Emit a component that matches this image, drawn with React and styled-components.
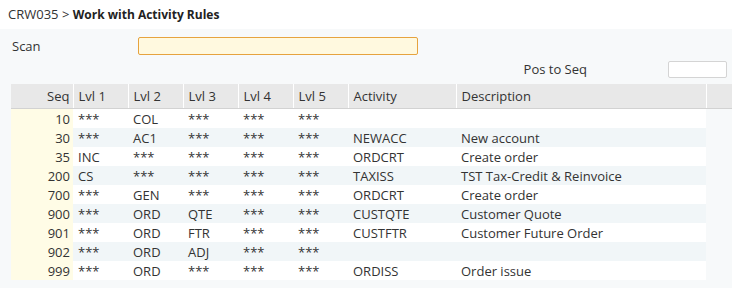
import styled, { createGlobalStyle } from "styled-components";

const GlobalStyle = createGlobalStyle`
  body {
    margin: 0;
    background: #ffffff;
    font-family: "Open Sans", "Liberation Sans", sans-serif;
    color: #333333;
  }
`;

const columns = [
  { key: "seq", label: "Seq", width: 62, align: "right" },
  { key: "l1", label: "Lvl 1", width: 55 },
  { key: "l2", label: "Lvl 2", width: 55 },
  { key: "l3", label: "Lvl 3", width: 55 },
  { key: "l4", label: "Lvl 4", width: 55 },
  { key: "l5", label: "Lvl 5", width: 55 },
  { key: "act", label: "Activity", width: 108 },
  { key: "desc", label: "Description", width: 250 },
];

const rows = [
  ["10", "***", "COL", "***", "***", "***", "", ""],
  ["30", "***", "AC1", "***", "***", "***", "NEWACC", "New account"],
  ["35", "INC", "***", "***", "***", "***", "ORDCRT", "Create order"],
  ["200", "CS", "***", "***", "***", "***", "TAXISS", "TST Tax-Credit & Reinvoice"],
  ["700", "***", "GEN", "***", "***", "***", "ORDCRT", "Create order"],
  ["900", "***", "ORD", "QTE", "***", "***", "CUSTQTE", "Customer Quote"],
  ["901", "***", "ORD", "FTR", "***", "***", "CUSTFTR", "Customer Future Order"],
  ["902", "***", "ORD", "ADJ", "***", "***", "", ""],
  ["999", "***", "ORD", "***", "***", "***", "ORDISS", "Order issue"],
];

function App() {
  return (
    <>
      <GlobalStyle />
      <Title>
        CRW035 &gt; <strong>Work with Activity Rules</strong>
      </Title>
      <Panel>
        <ScanRow>
          <ScanLabel>Scan</ScanLabel>
          <ScanInput />
        </ScanRow>
        <PosRow>
          <PosLabel>Pos to Seq</PosLabel>
          <PosInput />
        </PosRow>
        <Grid>
          <thead>
            <tr>
              {columns.map((c) => (
                <Head key={c.key} $width={c.width} $align={c.align}>
                  {c.label}
                </Head>
              ))}
              <Head />
            </tr>
          </thead>
          <tbody>
            {rows.map((r, i) => (
              <Row key={r[0]} $alt={i % 2 === 1}>
                {r.map((v, j) => (
                  <Cell key={j} $seq={j === 0}>
                    {v}
                  </Cell>
                ))}
                <Filler />
              </Row>
            ))}
          </tbody>
        </Grid>
      </Panel>
    </>
  );
}

const Title = styled.div`
  height: 29px;
  padding-left: 8px;
  font-size: 13px;
  line-height: 29px;
  color: #333;

  & strong {
    font-size: 12px;
    font-weight: 700;
    color: #222;
  }
`;

const Panel = styled.div`
  background: #f7f9fa;
  padding: 8px 0 9px 11px;
  min-height: 259px;
  box-sizing: border-box;
`;

const ScanRow = styled.div`
  display: flex;
  align-items: center;
  height: 18px;
`;

const ScanLabel = styled.span`
  width: 126px;
  padding-left: 1px;
  font-size: 13px;
`;

const ScanInput = styled.div`
  width: 278px;
  height: 16px;
  background: #fff9df;
  border: 1px solid #e6a33e;
  border-radius: 2px;
`;

const PosRow = styled.div`
  display: flex;
  align-items: center;
  justify-content: flex-end;
  height: 18px;
  margin-top: 5px;
  padding-right: 5px;
`;

const PosLabel = styled.span`
  font-size: 13px;
  margin-right: 81px;
`;

const PosInput = styled.div`
  width: 57px;
  height: 15px;
  background: #ffffff;
  border: 1px solid #d4d4d4;
  border-radius: 2px;
`;

const Grid = styled.table`
  margin-top: 6px;
  border-collapse: collapse;
  table-layout: fixed;
  width: 721px;
  font-size: 13px;
`;

const Head = styled.th`
  width: ${(p) => (p.$width ? `${p.$width}px` : "auto")};
  height: 24px;
  padding: 1px 5px 0;
  background: #e8e8e8;
  border-left: 1px solid #ffffff;
  border-bottom: 1px solid #d2d2d2;
  text-align: ${(p) => p.$align || "left"};
  font-weight: 400;
  color: #333;
  box-sizing: border-box;
  line-height: 20px;

  &:first-child {
    border-left: none;
    padding-right: 3px;
  }
`;

const Row = styled.tr`
  height: 19px;

  & td:not(:first-child):not(:last-child) {
    background: ${(p) => (p.$alt ? "#f1f6f8" : "#ffffff")};
  }
`;

const Cell = styled.td`
  padding: ${(p) => (p.$seq ? "1px 3px 0 5px" : "1px 5px 0")};
  text-align: ${(p) => (p.$seq ? "right" : "left")};
  white-space: nowrap;
  overflow: hidden;
  height: 19px;
  line-height: 18px;
  box-sizing: border-box;
  color: #333;

  &:first-child {
    background: #fffce6;
  }
`;

const Filler = styled.td`
  background: transparent;
`;

export default App;
